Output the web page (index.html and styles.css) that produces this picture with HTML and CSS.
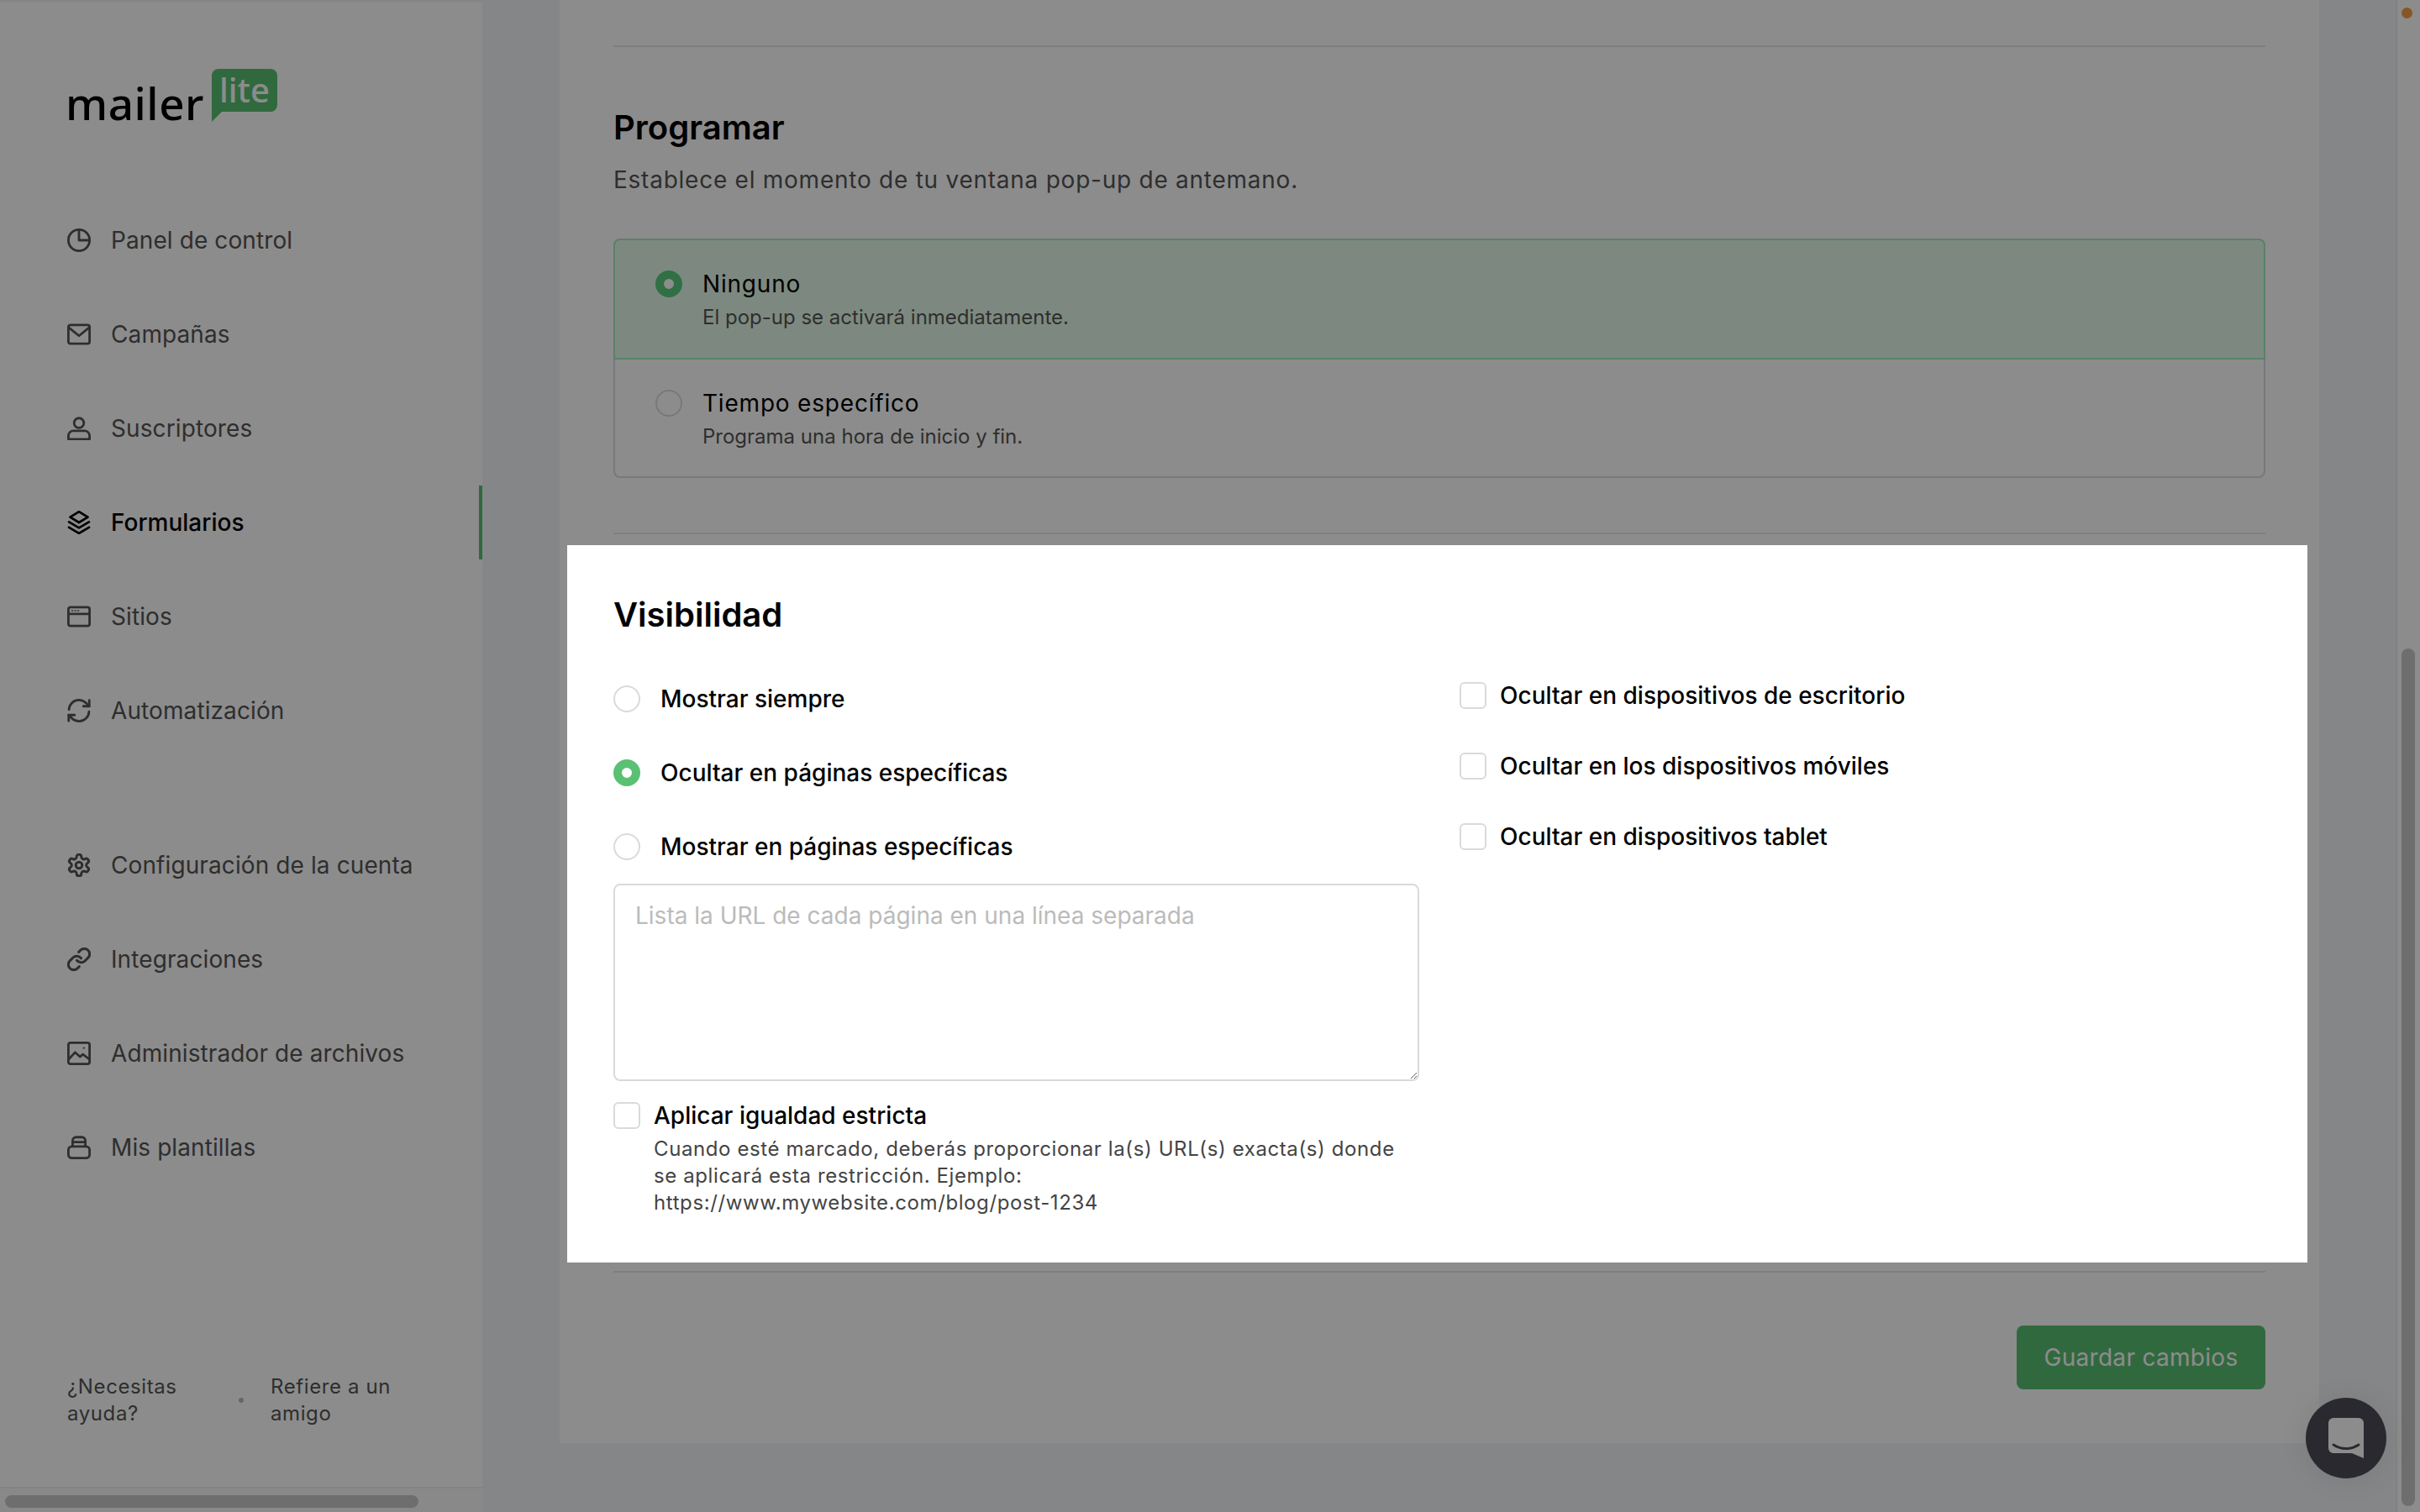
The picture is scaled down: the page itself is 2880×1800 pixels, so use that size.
FILE: index.html
```html
<!DOCTYPE html>
<html lang="es">
<head>
    <meta charset="UTF-8">
    <title>MailerLite - Formularios</title>
    <link rel="stylesheet" href="styles.css">
</head>
<body>
    <div class="app">
        <aside class="sidebar">
            <div class="logo">
                <span class="logo-word">mailer</span>
                <span class="logo-badge">lite</span>
            </div>

            <nav class="nav">
                <a class="nav-item">
                    <svg class="nav-icon" viewBox="0 0 24 24"><circle cx="12" cy="12" r="10.800"/><path d="M12 1.500V12h10.500"/></svg>
                    <span>Panel de control</span>
                </a>
                <a class="nav-item">
                    <svg class="nav-icon" viewBox="0 0 24 24"><rect x="1.200" y="2.500" width="21.600" height="19" rx="2"/><path d="M1.500 5L12 13.500 22.500 5"/></svg>
                    <span>Campañas</span>
                </a>
                <a class="nav-item">
                    <svg class="nav-icon" viewBox="0 0 24 24"><circle cx="12" cy="6.500" r="5"/><path d="M1.200 23v-3.500a5 5 0 0 1 5-5h11.600a5 5 0 0 1 5 5V23z"/></svg>
                    <span>Suscriptores</span>
                </a>
                <a class="nav-item active">
                    <svg class="nav-icon" viewBox="0 0 24 24"><path d="M12 1l9 5.500-9 5.500-9-5.500z"/><path d="M1.800 11.500L12 17.500l10.200-6"/><path d="M1.800 17L12 23l10.200-6"/></svg>
                    <span>Formularios</span>
                </a>
                <a class="nav-item">
                    <svg class="nav-icon" viewBox="0 0 24 24"><rect x="1.200" y="2.500" width="21.600" height="19" rx="2"/><path d="M1.500 9.300h21"/><path class="dots" d="M4.800 6h.8M7.800 6h.8M10.800 6h.8"/></svg>
                    <span>Sitios</span>
                </a>
                <a class="nav-item">
                    <svg class="nav-icon" viewBox="0 0 24 24"><path d="M1.800 11a10 10 0 0 1 10.200-9.800 10.300 10.300 0 0 1 7.100 2.900L22.500 7.500"/><path d="M22.500 1.500v6h-6"/><path d="M22.200 13a10 10 0 0 1-10.200 9.800 10.300 10.300 0 0 1-7.100-2.900L1.500 16.500"/><path d="M7.500 16.500h-6v6"/></svg>
                    <span>Automatización</span>
                </a>
            </nav>

            <nav class="nav nav-second">
                <a class="nav-item">
                    <svg class="nav-icon" viewBox="1 1 22 22"><path d="M12.220 2h-.44a2 2 0 0 0-2 2v.18a2 2 0 0 1-1 1.730l-.43.25a2 2 0 0 1-2 0l-.15-.08a2 2 0 0 0-2.730.73l-.22.38a2 2 0 0 0 .73 2.730l.15.1a2 2 0 0 1 1 1.720v.51a2 2 0 0 1-1 1.740l-.15.09a2 2 0 0 0-.73 2.730l.22.38a2 2 0 0 0 2.730.73l.15-.08a2 2 0 0 1 2 0l.43.25a2 2 0 0 1 1 1.730V20a2 2 0 0 0 2 2h.44a2 2 0 0 0 2-2v-.18a2 2 0 0 1 1-1.730l.43-.25a2 2 0 0 1 2 0l.15.08a2 2 0 0 0 2.730-.73l.22-.39a2 2 0 0 0-.73-2.730l-.15-.08a2 2 0 0 1-1-1.740v-.5a2 2 0 0 1 1-1.740l.15-.09a2 2 0 0 0 .73-2.730l-.22-.38a2 2 0 0 0-2.730-.73l-.15.08a2 2 0 0 1-2 0l-.43-.25a2 2 0 0 1-1-1.730V4a2 2 0 0 0-2-2z"/><circle cx="12" cy="12" r="3"/></svg>
                    <span>Configuración de la cuenta</span>
                </a>
                <a class="nav-item">
                    <svg class="nav-icon" viewBox="1 1 22 22"><path d="M10 13a5 5 0 0 0 7.540.54l3-3a5 5 0 0 0-7.070-7.070l-1.720 1.710"/><path d="M14 11a5 5 0 0 0-7.540-.54l-3 3a5 5 0 0 0 7.070 7.070l1.710-1.710"/></svg>
                    <span>Integraciones</span>
                </a>
                <a class="nav-item">
                    <svg class="nav-icon" viewBox="0 0 24 24"><rect x="1.200" y="1.200" width="21.600" height="21.600" rx="2"/><path d="M1.500 18l6.500-7 5 4.500 3-2.500 6.500 5"/><path class="dots" d="M16.500 6.500h1"/></svg>
                    <span>Administrador de archivos</span>
                </a>
                <a class="nav-item">
                    <svg class="nav-icon" viewBox="0 0 24 24"><path d="M5.500 11V5a3.500 3.500 0 0 1 3.500-3.500h6A3.500 3.500 0 0 1 18.500 5v6"/><path d="M5.500 6.500h13"/><rect x="1.200" y="11" width="21.600" height="11.800" rx="3.500"/></svg>
                    <span>Mis plantillas</span>
                </a>
            </nav>

            <div class="side-footer">
                <a class="side-link">¿Necesitas ayuda?</a>
                <span class="side-dot"></span>
                <a class="side-link">Refiere a un amigo</a>
            </div>

            <div class="side-scroll"><div class="side-thumb"></div></div>
        </aside>

        <main class="main">
            <div class="card">
                <hr class="rule">

                <section class="schedule">
                    <h2 class="title">Programar</h2>
                    <p class="subtitle">Establece el momento de tu ventana pop-up de antemano.</p>
                    <div class="option-box">
                        <label class="option selected">
                            <input type="radio" class="radio" name="schedule" checked>
                            <span class="option-text">
                                <span class="option-name">Ninguno</span>
                                <span class="option-hint">El pop-up se activará inmediatamente.</span>
                            </span>
                        </label>
                        <label class="option">
                            <input type="radio" class="radio" name="schedule">
                            <span class="option-text">
                                <span class="option-name">Tiempo específico</span>
                                <span class="option-hint">Programa una hora de inicio y fin.</span>
                            </span>
                        </label>
                    </div>
                </section>

                <hr class="rule">

                <section class="visibility">
                    <h2 class="title">Visibilidad</h2>
                    <div class="vis-columns">
                        <div class="vis-left">
                            <label class="radio-row">
                                <input type="radio" class="radio" name="vis">
                                <span>Mostrar siempre</span>
                            </label>
                            <label class="radio-row">
                                <input type="radio" class="radio" name="vis" checked>
                                <span>Ocultar en páginas específicas</span>
                            </label>
                            <label class="radio-row">
                                <input type="radio" class="radio" name="vis">
                                <span>Mostrar en páginas específicas</span>
                            </label>
                            <textarea class="url-list" placeholder="Lista la URL de cada página en una línea separada"></textarea>
                            <label class="strict">
                                <input type="checkbox" class="check">
                                <span class="strict-text">
                                    <span class="strict-name">Aplicar igualdad estricta</span>
                                    <span class="strict-hint">Cuando esté marcado, deberás proporcionar la(s) URL(s) exacta(s) donde se aplicará esta restricción. Ejemplo: https://www.mywebsite.com/blog/post-1234</span>
                                </span>
                            </label>
                        </div>
                        <div class="vis-right">
                            <label class="check-row">
                                <input type="checkbox" class="check">
                                <span>Ocultar en dispositivos de escritorio</span>
                            </label>
                            <label class="check-row">
                                <input type="checkbox" class="check">
                                <span>Ocultar en los dispositivos móviles</span>
                            </label>
                            <label class="check-row">
                                <input type="checkbox" class="check">
                                <span>Ocultar en dispositivos tablet</span>
                            </label>
                        </div>
                    </div>
                </section>

                <hr class="rule rule-after">

                <div class="actions">
                    <button class="save">Guardar cambios</button>
                </div>
            </div>
        </main>

        <div class="page-scroll">
            <span class="page-dot"></span>
            <div class="page-thumb"></div>
        </div>
    </div>

    <div class="backdrop"></div>

    <button class="chat">
        <svg viewBox="0 0 42 48" width="42" height="48"><path class="chat-bubble" d="M6 0h30a6 6 0 0 1 6 6v42l-14-6H6a6 6 0 0 1-6-6V6a6 6 0 0 1 6-6z"/><path class="chat-smile" d="M6 32c9 6 21 6 30 0"/></svg>
    </button>
</body>
</html>
```

FILE: styles.css
```css
* {
    box-sizing: border-box;
}

html, body {
    margin: 0;
    height: 100%;
    overflow: hidden;
}

body {
    font-family: 'Inter', 'Liberation Sans', sans-serif;
    color: #000;
    background: #f2f4f7;
}

.app {
    display: flex;
    height: 1800px;
}

/* sidebar */
.sidebar {
    width: 574px;
    flex-shrink: 0;
    display: flex;
    flex-direction: column;
    background: #fff;
    border-top: 2px solid #f0f0f0;
}

.logo {
    display: flex;
    align-items: flex-start;
    height: 240px;
    padding: 80px 0 0 78px;
}

.logo-word {
    font-family: 'Noto Sans', sans-serif;
    font-size: 53px;
    font-weight: 500;
    line-height: 76px;
    margin-top: 3px;
    letter-spacing: 0.5px;
}

.logo-badge {
    position: relative;
    width: 78px;
    height: 51px;
    margin-left: 9px;
    background: #5ac073;
    border-radius: 8px 8px 8px 0;
    color: #fff;
    font-family: 'Noto Sans', sans-serif;
    font-size: 40px;
    font-weight: 500;
    line-height: 50px;
    text-align: center;
}

.logo-badge::after {
    content: '';
    position: absolute;
    left: 0;
    top: 51px;
    border-top: 12px solid #5ac073;
    border-right: 12px solid transparent;
}

.nav {
    display: flex;
    flex-direction: column;
    gap: 24px;
}

.nav-second {
    margin-top: 96px;
}

.nav-item {
    display: flex;
    align-items: center;
    gap: 24px;
    height: 88px;
    padding-left: 80px;
    color: #555;
    font-size: 28px;
    line-height: 40px;
    letter-spacing: 0.1px;
}

.nav-item.active {
    color: #000;
    font-weight: 500;
    letter-spacing: 0;
    border-right: 4px solid #5ac073;
}

.nav-icon {
    width: 28px;
    height: 28px;
    flex-shrink: 0;
    fill: none;
    stroke: currentColor;
    stroke-width: 2.4;
    stroke-linejoin: round;
    stroke-linecap: round;
}

.nav-icon .dots {
    stroke-width: 1.4;
}

.side-footer {
    display: flex;
    align-items: center;
    margin-top: auto;
    padding: 0 0 71px 80px;
    color: #555;
    font-size: 24px;
    line-height: 32px;
    letter-spacing: 0.6px;
}

.side-link {
    width: 180px;
}

.side-dot {
    width: 6px;
    height: 6px;
    margin: 0 32px 0 24px;
    border-radius: 50%;
    background: #bbb;
}

.side-scroll {
    height: 30px;
    padding: 8px 6px 0;
    border-top: 2px solid #f0f0f0;
    background: #fafafa;
}

.side-thumb {
    width: 492px;
    height: 15px;
    border-radius: 8px;
    background: #c8c8c8;
}

/* main column */
.main {
    flex: 1;
    min-width: 0;
    padding: 0 91px 82px 92px;
}

.card {
    display: flex;
    flex-direction: column;
    height: 100%;
    padding: 54px 64px 0;
    background: #fff;
}

.rule {
    width: 100%;
    height: 2px;
    margin: 0;
    border: 0;
    background: #e8e8e8;
    flex-shrink: 0;
}

.schedule {
    padding-top: 68px;
    height: 578px;
}

.title {
    margin: 0;
    font-size: 40px;
    line-height: 56px;
    font-weight: 600;
}

.subtitle {
    margin: 14px 0 0;
    font-size: 28px;
    line-height: 40px;
    color: #555;
    letter-spacing: 0.75px;
}

.option-box {
    margin-top: 50px;
    border: 2px solid #d8dde3;
    border-radius: 8px;
}

.option {
    display: flex;
    gap: 24px;
    height: 139px;
    padding: 34px 0 0 48px;
}

.option.selected {
    height: 144px;
    margin: -2px -2px 0;
    background: #e3fae9;
    border: 2px solid #a2eeb8;
    border-radius: 8px 8px 0 0;
}

.option .radio {
    margin-top: 2px;
}

.option .radio:checked {
    border-color: #58cc7c;
}

.option-text {
    display: flex;
    flex-direction: column;
}

.option-name {
    font-size: 28px;
    line-height: 36px;
    letter-spacing: 0.8px;
}

.option-hint {
    margin-top: 4px;
    font-size: 24px;
    line-height: 36px;
    color: #555;
}

.radio,
.check {
    appearance: none;
    flex-shrink: 0;
    width: 32px;
    height: 32px;
    margin: 0;
    background: #fff;
    border: 2px solid #d8dadd;
}

.radio {
    border-radius: 50%;
}

.radio:checked {
    border: 10px solid #5ac073;
}

.check {
    border-radius: 6px;
}

/* spotlighted section, sits above the backdrop */
.visibility {
    position: relative;
    z-index: 20;
    height: 854px;
    margin: 13px -50px 0 -55px;
    padding: 55px 50px 0 55px;
    background: #fff;
}

.vis-columns {
    display: grid;
    grid-template-columns: 959px 1fr;
    gap: 48px;
    margin-top: 52px;
}

.radio-row {
    display: flex;
    align-items: center;
    gap: 24px;
    height: 40px;
    margin-top: 48px;
    font-size: 28px;
    font-weight: 500;
}

.radio-row:first-child {
    margin-top: 0;
}

.url-list {
    display: block;
    width: 100%;
    height: 235px;
    margin-top: 24px;
    padding: 18px 24px;
    border: 2px solid #d8dadd;
    border-radius: 8px;
    font-family: inherit;
    font-size: 28px;
    line-height: 36px;
    outline: none;
}

.url-list::placeholder {
    color: #bbb;
}

.strict {
    display: flex;
    gap: 16px;
    margin-top: 25px;
}

.strict-text {
    display: flex;
    flex-direction: column;
}

.strict-name {
    font-size: 28px;
    font-weight: 500;
    line-height: 32px;
}

.strict-hint {
    margin-top: 8px;
    font-size: 24px;
    line-height: 32px;
    color: #444;
    letter-spacing: 0.6px;
}

.vis-right {
    display: flex;
    flex-direction: column;
    gap: 44px;
    margin-top: -4px;
}

.check-row {
    display: flex;
    align-items: center;
    gap: 16px;
    height: 40px;
    font-size: 28px;
    font-weight: 500;
}

.rule-after {
    margin-top: 10px;
}

.actions {
    display: flex;
    justify-content: flex-end;
    margin-top: 63px;
}

.save {
    width: 296px;
    height: 76px;
    padding: 0;
    border: 0;
    border-radius: 8px;
    background: #5ac073;
    color: #fff;
    font-family: inherit;
    font-size: 28px;
    letter-spacing: 0.3px;
}

/* page scrollbar */
.page-scroll {
    position: relative;
    width: 29px;
    flex-shrink: 0;
    background: #fff;
    border-left: 2px solid #ececec;
}

.page-dot {
    position: absolute;
    left: 5px;
    top: 9px;
    width: 13px;
    height: 13px;
    border-radius: 50%;
    background: #f59e42;
}

.page-thumb {
    position: absolute;
    left: 5px;
    top: 772px;
    width: 16px;
    height: 1021px;
    border-radius: 8px;
    background: #c8c8c8;
}

.backdrop {
    position: fixed;
    inset: 0;
    z-index: 10;
    background: rgba(0, 0, 0, 0.45);
}

.chat {
    position: fixed;
    left: 2744px;
    top: 1664px;
    display: flex;
    align-items: center;
    justify-content: center;
    width: 96px;
    height: 96px;
    padding: 0;
    border: 0;
    border-radius: 50%;
    background: #4c4c57;
    box-shadow: 0 2px 40px rgba(0, 0, 0, 0.1);
}

.chat-bubble {
    fill: #fff;
}

.chat-smile {
    fill: none;
    stroke: #4c4c57;
    stroke-width: 3;
    stroke-linecap: round;
}
```
